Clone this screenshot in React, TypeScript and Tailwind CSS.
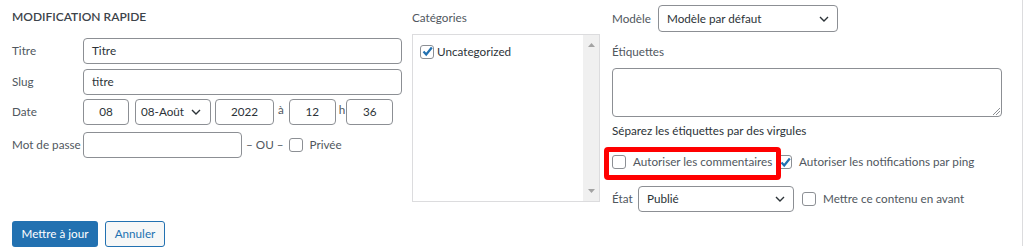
import React from "react";

const Chevron = () => (
  <svg width="10" height="6" viewBox="0 0 10 6" className="shrink-0">
    <polyline points="1,1 5,5 9,1" fill="none" stroke="#2c3338" strokeWidth="1.4" />
  </svg>
);

const Box = ({ checked = false }: { checked?: boolean }) => (
  <span className="relative flex h-[14px] w-[14px] shrink-0 items-center justify-center rounded-[3px] border border-[#8c8f94] bg-white">
    {checked && (
      <svg width="13" height="13" viewBox="0 0 13 13" className="absolute">
        <polyline points="2.5,6.5 5.2,9.5 10.8,2.5" fill="none" stroke="#2271b1" strokeWidth="2.2" />
      </svg>
    )}
  </span>
);

const Row = ({ label, children, className = "" }: { label: string; children: React.ReactNode; className?: string }) => (
  <div className={`flex h-[26px] items-center ${className}`}>
    <span className="w-[71px] shrink-0">{label}</span>
    {children}
  </div>
);

export default function App() {
  return (
    <div className="h-[252px] w-[1024px] whitespace-nowrap bg-white font-['Lato','Liberation_Sans',sans-serif] text-[11.7px] text-[#50575e]">
      <div className="h-[246px] w-[1023px] border-r border-[#dcdcde] pl-3">
        <div className="flex items-start">
          {/* left */}
          <div className="w-[390px] pt-[7px]">
            <div className="h-5 text-[12px] leading-5 font-semibold text-[#3c434a]">MODIFICATION RAPIDE</div>
            <Row label="Titre" className="mt-[11px]">
              <div className="flex h-full flex-1 items-center rounded-[4px] border border-[#8c8f94] px-2 text-[#2c3338]">Titre</div>
            </Row>
            <Row label="Slug" className="mt-[5px]">
              <div className="flex h-full flex-1 items-center rounded-[4px] border border-[#8c8f94] px-2 text-[#2c3338]">titre</div>
            </Row>
            <Row label="Date" className="mt-1">
              <div className="flex h-full items-stretch text-[#2c3338]">
                <div className="flex w-[46px] items-center justify-center rounded-[4px] border border-[#8c8f94]">08</div>
                <div className="ml-[6px] flex w-[76px] items-center justify-between rounded-[4px] border border-[#8c8f94] pl-[5px] pr-[9px]">
                  08-Août <Chevron />
                </div>
                <div className="ml-1 flex w-[59px] items-center justify-center rounded-[4px] border border-[#8c8f94]">2022</div>
                <span className="ml-1 text-[#50575e] leading-[20px]">à</span>
                <div className="ml-[5px] flex w-[47px] items-center justify-center rounded-[4px] border border-[#8c8f94]">12</div>
                <span className="ml-[3px] text-[#50575e] leading-[20px]">h</span>
                <div className="ml-[1px] flex w-[47px] items-center justify-center rounded-[4px] border border-[#8c8f94]">36</div>
              </div>
            </Row>
            <Row label="Mot de passe" className="mt-[7px]">
              <div className="h-full w-[159px] rounded-[4px] border border-[#8c8f94]" />
              <span className="ml-1">– OU –</span>
              <span className="ml-[5px]"><Box /></span>
              <span className="ml-[7px]">Privée</span>
            </Row>
          </div>

          {/* middle */}
          <div className="ml-[10px] w-[188px] pt-[7px]">
            <div className="h-5 leading-5">Catégories</div>
            <div className="mt-[7px] flex h-[168px] border border-[#dcdcde]">
              <div className="flex flex-1 items-start pl-[7px] pt-[8px]">
                <div className="flex items-center">
                  <Box checked />
                  <span className="ml-[3px] text-[#2c3338]">Uncategorized</span>
                </div>
              </div>
              <div className="flex w-[16px] flex-col items-center justify-between bg-[#f0f0f0] py-[8px]">
                <svg width="7" height="4" viewBox="0 0 7 4"><polygon points="0,4 3.5,0 7,4" fill="#a3a3a3" /></svg>
                <svg width="7" height="4" viewBox="0 0 7 4"><polygon points="0,0 3.5,4 7,0" fill="#a3a3a3" /></svg>
              </div>
            </div>
          </div>

          {/* right */}
          <div className="ml-3 w-[390px] pt-[5px]">
            <div className="flex h-[27px] items-center">
              <span className="w-[46px]">Modèle</span>
              <div className="flex h-full w-[180px] items-center justify-between rounded-[4px] border border-[#8c8f94] pl-2 pr-[8px] text-[#2c3338]">
                Modèle par défaut <Chevron />
              </div>
            </div>
            <div className="mt-[9px] h-5 leading-5">Étiquettes</div>
            <div className="relative mt-[7px] h-[49px] w-[390px] rounded-[4px] border border-[#8c8f94]">
              <svg width="8" height="8" viewBox="0 0 8 8" className="absolute bottom-[1px] right-[1px]">
                <line x1="1" y1="8" x2="8" y2="1" stroke="#8c8f94" strokeWidth="1" />
                <line x1="4" y1="8" x2="8" y2="4" stroke="#8c8f94" strokeWidth="1" />
              </svg>
            </div>
            <div className="mt-[3px] h-5 leading-5 text-[#2c3338]">Séparez les étiquettes par des virgules</div>
            <div className="relative mt-3 flex h-5 items-center">
              <Box />
              <span className="ml-[7px] w-[139px]">Autoriser les commentaires</span>
              <span className="ml-[6px]"><Box checked /></span>
              <span className="ml-[7px]">Autoriser les notifications par ping</span>
              <div className="absolute left-[-8px] top-[-5px] z-10 h-[33px] w-[177px] rounded-[4px] border-[5px] border-[#ff0000]" />
            </div>
            <div className="mt-[14px] flex h-[26px] items-center">
              <span className="w-[26px]">État</span>
              <div className="flex h-full w-[156px] items-center justify-between rounded-[4px] border border-[#8c8f94] pl-2 pr-[8px] text-[#2c3338]">
                Publié <Chevron />
              </div>
              <span className="ml-2"><Box /></span>
              <span className="ml-[7px]">Mettre ce contenu en avant</span>
            </div>
          </div>
        </div>

        <div className="mt-[9px] flex h-[26px]">
          <button className="w-[86px] rounded-[3px] bg-[#2271b1] text-white">Mettre à jour</button>
          <button className="ml-[7px] w-[60px] rounded-[3px] border border-[#2271b1] bg-[#f6f7f7] text-[#2271b1]">Annuler</button>
        </div>
      </div>
    </div>
  );
}
